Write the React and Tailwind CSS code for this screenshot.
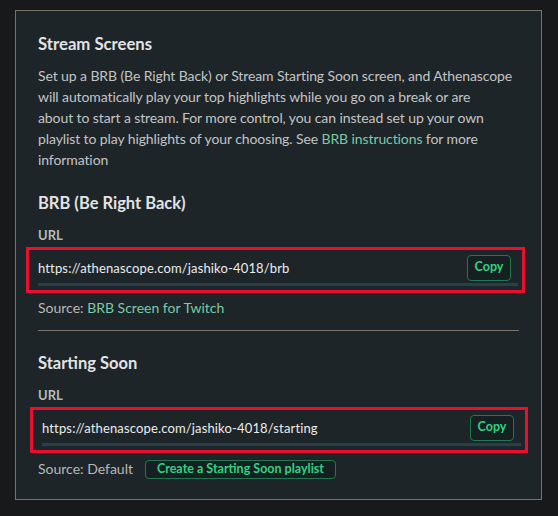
import React from 'react';

const font = { fontFamily: 'Lato, "Open Sans", sans-serif' };

const UrlField = ({ url, shift }) => (
    <div className={`border-[3px] border-[#e8102e] ${shift} h-[46px] pl-[9px] pr-[4px] pt-[4px]`}>
        <div className="flex items-center justify-between h-[32px] border-b-[3px] border-[#27404b]">
            <span className="text-[13px] tracking-[0.15px] text-[#ececec]">{url}</span>
            <button className="w-[44px] h-[26px] mr-[7px] mb-[2px] rounded border border-[#1e7a4e] bg-[#162022] text-[12.5px] font-bold text-[#2ed47f]">
                Copy
            </button>
        </div>
    </div>
);

const App = () => {
    return (
        <div className="w-[558px] h-[516px] bg-[#18191b] pt-[10px] pl-[15px]" style={font}>
            <div className="w-[527px] h-[490px] border border-[#77736b] bg-[#1d2529] px-[22px] pt-[20px]">
                <h2 className="text-[16.7px] font-bold text-[#e3e3e3] leading-[26px]">Stream Screens</h2>
                <p className="mt-[8px] text-[14px] tracking-[-0.1px] leading-[21px] text-[#c4c4c4] whitespace-nowrap">
                    Set up a BRB (Be Right Back) or Stream Starting Soon screen, and Athenascope<br />
                    will automatically play your top highlights while you go on a break or are<br />
                    about to start a stream. For more control, you can instead set up your own<br />
                    playlist to play highlights of your choosing. See <span className="text-[#7ccaa4]">BRB instructions</span> for more<br />
                    information
                </p>
                <h3 className="mt-[20px] text-[16.5px] font-bold text-[#e3e3e3] leading-[26px]">BRB (Be Right Back)</h3>
                <div className="mt-[10px] text-[13px] font-bold text-[#b8b8b8] leading-[18px]">URL</div>
                <div className="mt-[3px]">
                    <UrlField url="https://athenascope.com/jashiko-4018/brb" shift="-ml-[12px] w-[499px]" />
                </div>
                <div className="mt-[5px] text-[14px] leading-[20px] text-[#b8b8b8]">
                    Source: <span className="text-[#7ccaa4]">BRB Screen for Twitch</span>
                </div>
                <div className="mt-[12px] border-t border-[#77736b]" />
                <h3 className="mt-[19px] text-[16.5px] font-bold text-[#e3e3e3] leading-[26px]">Starting Soon</h3>
                <div className="mt-[10px] text-[13px] font-bold text-[#b8b8b8] leading-[18px]">URL</div>
                <div className="mt-[3px]">
                    <UrlField url="https://athenascope.com/jashiko-4018/starting" shift="-ml-[8px] w-[498px]" />
                </div>
                <div className="mt-[6px] flex items-center gap-[12px]">
                    <span className="text-[14px] leading-[20px] text-[#b8b8b8]">Source: Default</span>
                    <button className="h-[19px] px-[11px] rounded border border-[#1e7a4e] bg-[#162022] text-[12.5px] font-bold text-[#2ed47f] leading-none">
                        Create a Starting Soon playlist
                    </button>
                </div>
            </div>
        </div>
    );
};

export default App;
